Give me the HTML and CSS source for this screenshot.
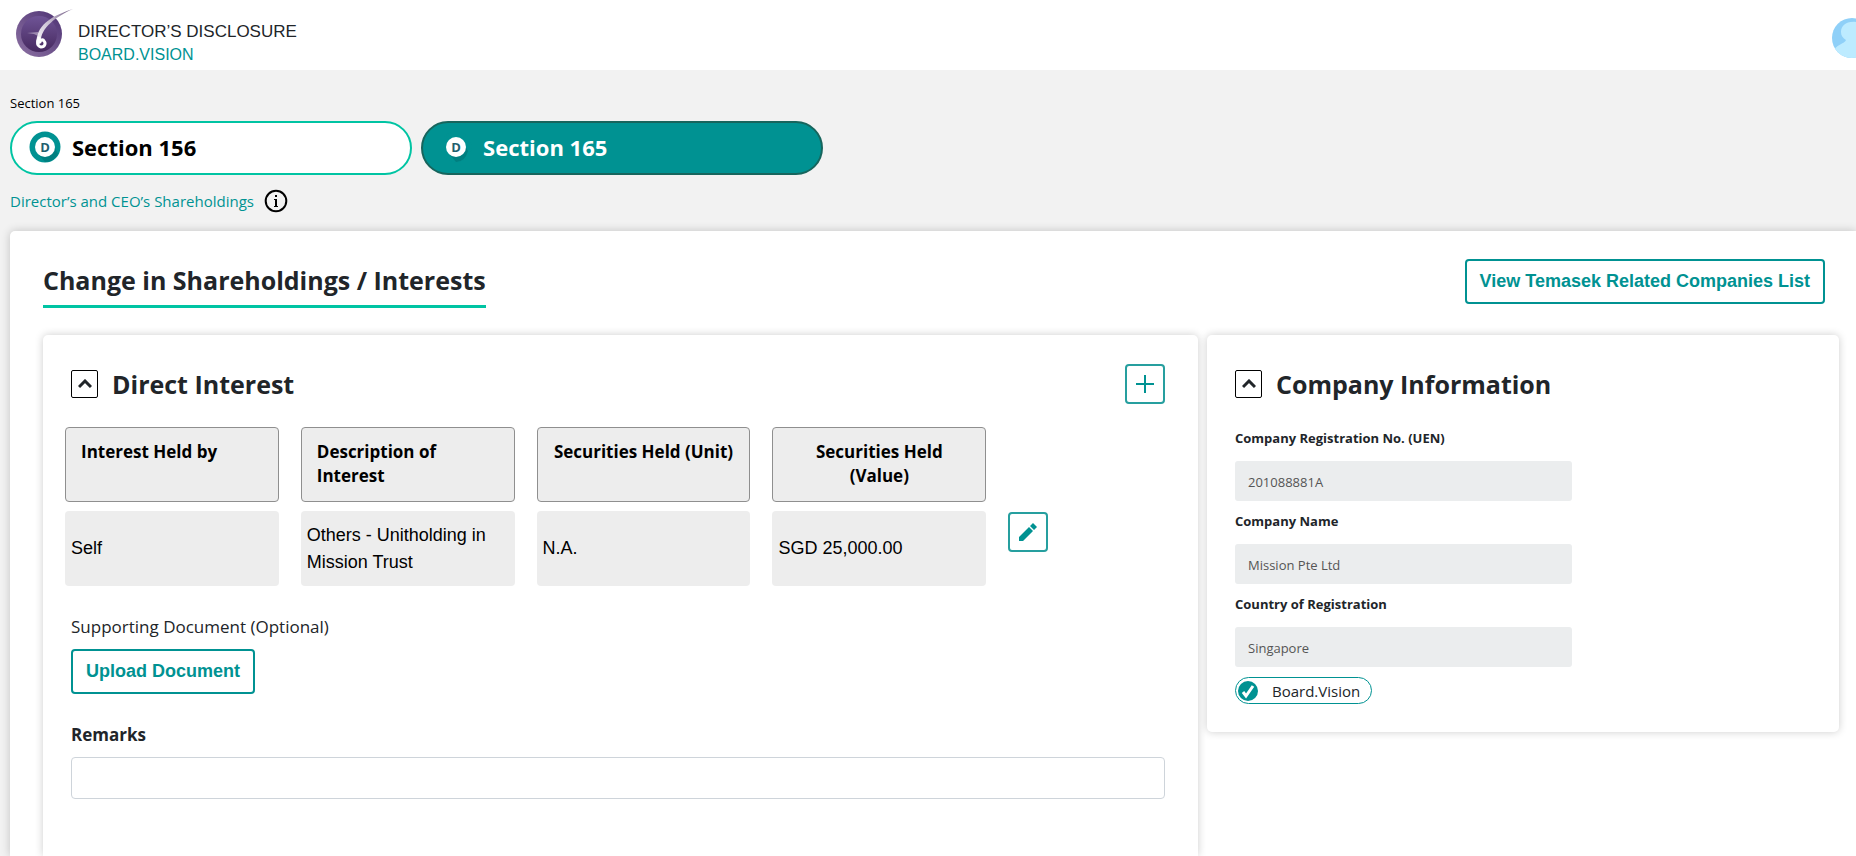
FILE: index.html
```
<!DOCTYPE html>
<html lang="en">
<head>
  <meta charset="UTF-8">
  <meta name="viewport" content="width=device-width, initial-scale=1.0">
  <title>Director’s Disclosure - Board.Vision</title>
  <link rel="stylesheet" href="styles.css">
</head>
<body>

  <!-- Top bar -->
  <header class="topbar">
    <svg class="logo" width="60" height="50" viewBox="0 0 60 50" aria-hidden="true">
      <defs>
        <linearGradient id="ring" x1="1" y1="0" x2="0" y2="1">
          <stop offset="0" stop-color="#4d3273"/>
          <stop offset="1" stop-color="#8d72a3"/>
        </linearGradient>
        <linearGradient id="disc" x1="0" y1="0" x2="0" y2="1">
          <stop offset="0" stop-color="#6f5496"/>
          <stop offset="1" stop-color="#46295f"/>
        </linearGradient>
        <linearGradient id="ribbon" x1="1" y1="0" x2="0" y2="1">
          <stop offset="0" stop-color="#6d5680"/>
          <stop offset="0.5" stop-color="#c9bfd2"/>
          <stop offset="1" stop-color="#ffffff"/>
        </linearGradient>
      </defs>
      <circle cx="24" cy="26" r="23" fill="url(#ring)"/>
      <circle cx="24" cy="26" r="18" fill="url(#disc)"/>
      <path d="M58 1C42 6 25 14 22 29C21 33 21 36 22 38L26 34C25 20 42 8 58 1Z" fill="url(#ribbon)"/>
      <path d="M24 30C22 34 22 38 26 39C30 39 31 35 29 33C28 31 25 32 25 34" fill="none" stroke="#fff" stroke-width="3" stroke-linecap="round"/>
      <path d="M12 25L23 24L23 28L19 26Z" fill="#b9aac6" opacity="0.7"/>
    </svg>
    <div class="brand">
      <div class="brand-title">DIRECTOR’S DISCLOSURE</div>
      <a class="brand-link" href="#">BOARD.VISION</a>
    </div>
    <svg class="avatar" width="24" height="40" viewBox="0 0 24 40" role="img" aria-label="Profile">
      <defs>
        <clipPath id="round"><circle cx="20" cy="20" r="20"/></clipPath>
      </defs>
      <g clip-path="url(#round)">
        <rect width="40" height="40" fill="#8fd0f8"/>
        <path d="M24 4C14 3 9 8 9 14C9 18 11 20 14 22C13 26 3 26 1 35L4 40H24Z" fill="#bdebff"/>
      </g>
    </svg>
  </header>

  <!-- Section switch -->
  <div class="sections">
    <div class="crumb">Section 165</div>
    <nav class="tabs">
      <button class="tab" type="button">
        <svg width="32" height="32" viewBox="0 0 32 32" aria-hidden="true">
          <circle cx="16" cy="16" r="15.5" fill="#009292"/>
          <path d="M10 24L16 31A15 15 0 0 0 29 23L24 13Z" fill="#007f80"/>
          <circle cx="16" cy="16" r="10" fill="#fff"/>
          <text x="16" y="21" class="tab-letter">D</text>
        </svg>
        Section 156
      </button>
      <button class="tab active" type="button">
        <svg width="32" height="32" viewBox="0 0 32 32" aria-hidden="true">
          <circle cx="16" cy="16" r="15.5" fill="#009292"/>
          <path d="M10 24L16 31Q25 31 28 20L24 13Z" fill="#007f80"/>
          <circle cx="16" cy="16" r="10" fill="#fff"/>
          <text x="16" y="21" class="tab-letter">D</text>
        </svg>
        Section 165
      </button>
    </nav>
    <div class="subtitle">
      <a href="#">Director’s and CEO’s Shareholdings</a>
      <svg width="24" height="24" viewBox="0 0 24 24" aria-hidden="true">
        <circle cx="12" cy="12" r="10.3" fill="none" stroke="#000" stroke-width="2"/>
        <rect x="11" y="6" width="2" height="2" fill="#000"/>
        <path d="M10 10H13V17H14V18H10V17H11V11H10Z" fill="#000"/>
      </svg>
    </div>
  </div>

  <!-- Main panel -->
  <main class="panel">
    <div class="panel-head">
      <h1>Change in Shareholdings / Interests</h1>
      <button class="btn" type="button">View Temasek Related Companies List</button>
    </div>

    <div class="cards">

      <!-- Direct interest -->
      <section class="card interest">
        <div class="card-head">
          <button class="toggle" type="button" aria-label="Collapse">
            <svg width="14" height="10" viewBox="0 0 14 10"><path d="M1 8L7 2L13 8" fill="none" stroke="#212529" stroke-width="3"/></svg>
          </button>
          <h2>Direct Interest</h2>
          <button class="icon-btn" type="button" aria-label="Add">
            <svg width="20" height="20" viewBox="0 0 20 20"><path d="M10 1V19M1 10H19" stroke="#009292" stroke-width="2"/></svg>
          </button>
        </div>

        <table class="holdings">
          <colgroup>
            <col class="col-data"><col class="col-data"><col class="col-data"><col class="col-data"><col>
          </colgroup>
          <thead>
            <tr>
              <th>Interest Held by</th>
              <th>Description of Interest</th>
              <th class="center">Securities Held (Unit)</th>
              <th class="center">Securities Held (Value)</th>
              <td class="action"></td>
            </tr>
          </thead>
          <tbody>
            <tr>
              <td>Self</td>
              <td>Others - Unitholding in Mission Trust</td>
              <td>N.A.</td>
              <td>SGD 25,000.00</td>
              <td class="action">
                <button class="icon-btn" type="button" aria-label="Edit">
                  <svg width="20" height="20" viewBox="0 0 20 20">
                    <path d="M1 15L11 5L15 9L5 19H1ZM12 4L15 1L19 5L16 8Z" fill="#009292"/>
                  </svg>
                </button>
              </td>
            </tr>
          </tbody>
        </table>

        <div class="form">
          <div class="form-text">Supporting Document (Optional)</div>
          <button class="btn" type="button">Upload Document</button>
          <label class="form-label" for="remarks">Remarks</label>
          <input class="text-input" type="text" id="remarks">
        </div>
      </section>

      <!-- Company information -->
      <section class="card company">
        <div class="card-head">
          <button class="toggle" type="button" aria-label="Collapse">
            <svg width="14" height="10" viewBox="0 0 14 10"><path d="M1 8L7 2L13 8" fill="none" stroke="#212529" stroke-width="3"/></svg>
          </button>
          <h2>Company Information</h2>
        </div>
        <div class="fields">
          <label for="uen">Company Registration No. (UEN)</label>
          <input type="text" id="uen" value="201088881A" readonly>
          <label for="name">Company Name</label>
          <input type="text" id="name" value="Mission Pte Ltd" readonly>
          <label for="country">Country of Registration</label>
          <input type="text" id="country" value="Singapore" readonly>
          <div class="badge">
            <svg width="20" height="20" viewBox="0 0 20 20" aria-hidden="true">
              <circle cx="10" cy="10" r="10" fill="#009292"/>
              <path d="M5 11L8 15L15 5" fill="none" stroke="#fff" stroke-width="3"/>
            </svg>
            Board.Vision
          </div>
        </div>
      </section>

    </div>
  </main>

</body>
</html>
```
FILE: styles.css
```
/* General page style */
* {
  box-sizing: border-box;
}

body {
  margin: 0;
  min-height: 100vh;
  display: flex;
  flex-direction: column;
  font-family: "Open Sans", "Noto Sans", sans-serif;
  font-size: 16px;
  color: #212529;
  background-color: #f2f2f2;
}

button,
input {
  font-family: inherit;
  margin: 0;
}

button {
  cursor: pointer;
}

a {
  color: #009292;
  text-decoration: none;
}

h1,
h2 {
  margin: 0;
  font-size: 25px;
  line-height: 32px;
  font-weight: 700;
}

/* Top bar */
.topbar {
  display: flex;
  align-items: center;
  height: 70px;
  padding: 0 0 4px 15px;
  background-color: #fff;
}

.brand {
  padding: 20px 0 0 3px;
  font-family: "Liberation Sans", Arial, sans-serif;
  font-size: 17px;
  line-height: 23px;
}

.brand-link {
  font-size: 16px;
}

.avatar {
  margin: 10px 0 0 auto;
}

/* Section switch */
.sections {
  padding: 23px 10px 18px;
}

.crumb {
  font-size: 13px;
  line-height: 20px;
  color: #000;
}

.tabs {
  display: flex;
  gap: 9px;
  margin: 8px 0 14px;
}

.tab {
  display: flex;
  align-items: center;
  gap: 11px;
  width: 21.9%;
  height: 54px;
  padding: 0 17px 2px;
  border: 2px solid #00c4a3;
  border-radius: 27px;
  background-color: #fff;
  color: #000;
  font-size: 22px;
  font-weight: 700;
}

.tab.active {
  border-color: #17655d;
  background-color: #009292;
  color: #fff;
}

.tab-letter {
  font-size: 13px;
  font-weight: 700;
  text-anchor: middle;
  fill: #1f5f6e;
}

.subtitle {
  display: flex;
  align-items: center;
  gap: 10px;
  font-size: 15px;
  line-height: 24px;
}

/* Main panel */
.panel {
  flex: 1;
  display: flex;
  flex-direction: column;
  margin-left: 10px;
  padding: 28px 17px 0 33px;
  border-top-left-radius: 5px;
  background-color: #fff;
  box-shadow: 0 0 10px rgba(0, 0, 0, 0.2);
}

.panel-head {
  display: flex;
  justify-content: space-between;
  align-items: flex-start;
  padding-right: 14px;
  margin-bottom: 27px;
}

.panel-head h1 {
  padding: 5px 0 9px;
  border-bottom: 3px solid #00c4a3;
}

.btn {
  height: 45px;
  padding: 0 13px;
  border: 2px solid #009292;
  border-radius: 4px;
  background-color: #fff;
  color: #009292;
  font-family: "Liberation Sans", Arial, sans-serif;
  font-size: 18px;
  font-weight: 700;
}

/* Cards */
.cards {
  flex: 1;
  display: grid;
  grid-template-columns: 1155fr 632fr;
  gap: 9px;
}

.card {
  border-radius: 5px;
  background-color: #fff;
  box-shadow: 0 0 8px rgba(0, 0, 0, 0.2);
}

.interest {
  border-bottom-left-radius: 0;
  border-bottom-right-radius: 0;
}

.company {
  align-self: start;
  padding-bottom: 28px;
}

.card-head {
  display: flex;
  align-items: center;
  gap: 14px;
  padding: 28px 33px 0 28px;
  height: 70px;
}

.toggle {
  display: flex;
  align-items: center;
  justify-content: center;
  width: 27px;
  height: 28px;
  padding: 0;
  border: 1px solid #000;
  border-radius: 2px;
  background-color: #fff;
}

.icon-btn {
  display: flex;
  align-items: center;
  justify-content: center;
  width: 40px;
  height: 40px;
  padding: 0;
  border: 2px solid #269f9f;
  border-radius: 4px;
  background-color: #fff;
}

.card-head .icon-btn {
  margin-left: auto;
}

/* Holdings table */
.holdings {
  width: 100%;
  margin: 13px 0 20px;
  table-layout: fixed;
  border-collapse: separate;
  border-spacing: 22px 9px;
}

.col-data {
  width: 20.9%;
}

.holdings th {
  height: 75px;
  padding: 12px 15px;
  border: 1px solid #8f8f8f;
  border-radius: 4px;
  background-color: #ededed;
  color: #000;
  font-size: 17px;
  line-height: 24px;
  font-weight: 700;
  text-align: left;
  vertical-align: top;
}

.holdings th.center {
  padding: 12px 10px;
  text-align: center;
}

.holdings th.center:nth-child(4) {
  padding: 12px 30px;
}

.holdings td {
  height: 75px;
  padding: 0 6px;
  border-radius: 4px;
  background-color: #ededed;
  color: #000;
  font-family: "Liberation Sans", Arial, sans-serif;
  font-size: 18px;
  line-height: 27px;
}

.holdings td.action {
  padding: 1px 0 0;
  background-color: transparent;
  vertical-align: top;
}

/* Form under the table */
.form {
  display: flex;
  flex-direction: column;
  align-items: flex-start;
  padding: 0 33px 32px 28px;
}

.form-text {
  margin-bottom: 10px;
  font-size: 17px;
  line-height: 24px;
}

.form-label {
  margin: 29px 0 10px;
  font-size: 17px;
  line-height: 24px;
  font-weight: 700;
}

.text-input {
  width: 100%;
  height: 42px;
  padding: 6px 12px;
  border: 1px solid #ced4da;
  border-radius: 4px;
  font-size: 16px;
}

/* Company fields */
.fields {
  display: flex;
  flex-direction: column;
  width: 64%;
  padding: 23px 39px 0 28px;
}

.fields label {
  margin-bottom: 13px;
  font-size: 13px;
  line-height: 20px;
  font-weight: 700;
}

.fields input {
  width: 100%;
  height: 40px;
  margin-bottom: 10px;
  padding: 2px 13px 0;
  border: 0;
  border-radius: 3px;
  background-color: #ebedee;
  color: #555;
  font-size: 13px;
}

.badge {
  display: flex;
  align-items: center;
  align-self: flex-start;
  gap: 14px;
  height: 27px;
  padding: 0 11px 0 2px;
  border: 1px solid #009292;
  border-radius: 14px;
  font-size: 15px;
}
```
